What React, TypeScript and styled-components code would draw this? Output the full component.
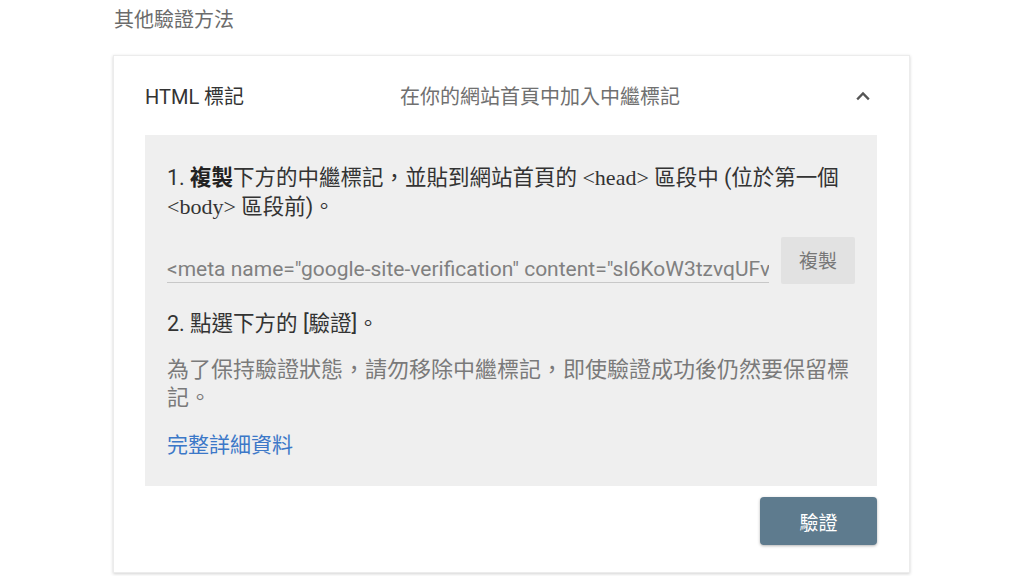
import React from "react";
import styled, { createGlobalStyle } from "styled-components";

const Global = createGlobalStyle`
  html, body { margin: 0; padding: 0; background: #ffffff; }
  body { font-family: Roboto, "Noto Sans CJK TC", "Noto Sans", sans-serif; }
`;

const Page = styled.div`
  width: 1024px;
  height: 576px;
  overflow: hidden;
  padding: 7px 0 0 113px;
  box-sizing: border-box;
`;

const Title = styled.div`
  font-size: 20px;
  line-height: 26px;
  color: #6b6b6b;
  padding-left: 1px;
`;

const Card = styled.section`
  margin-top: 22px;
  width: 797px;
  height: 518px;
  box-sizing: border-box;
  background: #fff;
  border: 1px solid #ececec;
  box-shadow: 0 1px 3px rgba(0, 0, 0, 0.18);
  padding: 0 32px 0 31px;
  display: flex;
  flex-direction: column;
`;

const Header = styled.div`
  height: 79px;
  display: grid;
  grid-template-columns: 255px 1fr 40px;
  align-items: center;
`;

const Label = styled.div`
  font-size: 20px;
  color: #333;
`;

const Desc = styled.div`
  font-size: 20px;
  color: #707070;
`;

const Chevron = styled.div`
  display: flex;
  justify-content: flex-end;
  color: #555;
  padding-right: 4px;
`;

const Box = styled.div`
  background: #efefef;
  padding: 28px 22px 27px 22px;
  display: flex;
  flex-direction: column;
`;

const Step = styled.p<{ $gap?: number }>`
  margin: ${(p) => p.$gap ?? 0}px 0 0;
  font-size: 21.5px;
  line-height: 29px;
  color: #333;
  white-space: nowrap;
  b { font-weight: 700; color: #222; }
`;

const Code = styled.span`
  font-family: "Liberation Serif", "DejaVu Serif", serif;
  font-size: 22px;
`;

const CopyRow = styled.div`
  margin-top: 16px;
  display: flex;
  align-items: flex-end;
  gap: 12px;
`;

const Field = styled.div`
  flex: 1;
  min-width: 0;
  height: 30px;
  border-bottom: 1px solid #c8c8c8;
  font-size: 21px;
  line-height: 34px;
  color: #808080;
  white-space: nowrap;
  overflow: hidden;
  margin-bottom: 1px;
`;

const CopyButton = styled.button`
  width: 74px;
  height: 47px;
  border: none;
  border-radius: 2px;
  background: #e2e2e2;
  color: #777;
  font-family: inherit;
  font-size: 19px;
  padding: 0 0 2px;
`;

const Note = styled.p`
  margin: 18px 0 0;
  font-size: 22px;
  line-height: 28px;
  color: #7a7a7a;
`;

const Link = styled.a`
  margin-top: 19px;
  font-size: 21px;
  line-height: 28px;
  color: #3c78c8;
  text-decoration: none;
`;

const Footer = styled.div`
  display: flex;
  justify-content: flex-end;
  padding-top: 11px;
`;

const VerifyButton = styled.button`
  width: 117px;
  height: 48px;
  border: none;
  border-radius: 4px;
  background: #5e7b8e;
  color: #fff;
  font-family: inherit;
  font-size: 19px;
  box-shadow: 0 1px 3px rgba(0, 0, 0, 0.3);
`;

export default function App() {
  return (
    <>
      <Global />
      <Page>
        <Title>其他驗證方法</Title>
        <Card>
          <Header>
            <Label>HTML 標記</Label>
            <Desc>在你的網站首頁中加入中繼標記</Desc>
            <Chevron>
              <svg width="20" height="20" viewBox="0 0 24 24" fill="none" stroke="currentColor" strokeWidth="2.8" strokeLinecap="square">
                <path d="M6 15l6-6 6 6" />
              </svg>
            </Chevron>
          </Header>
          <Box>
            <Step>
              1. <b>複製</b>下方的中繼標記，並貼到網站首頁的 <Code>&lt;head&gt;</Code> 區段中 (位於第一個
              <br />
              <Code>&lt;body&gt;</Code> 區段前)。
            </Step>
            <CopyRow>
              <Field>&lt;meta name="google-site-verification" content="sl6KoW3tzvqUFv</Field>
              <CopyButton>複製</CopyButton>
            </CopyRow>
            <Step $gap={25}>2. 點選下方的 [驗證]。</Step>
            <Note>為了保持驗證狀態，請勿移除中繼標記，即使驗證成功後仍然要保留標記。</Note>
            <Link href="#">完整詳細資料</Link>
          </Box>
          <Footer>
            <VerifyButton>驗證</VerifyButton>
          </Footer>
        </Card>
      </Page>
    </>
  );
}
